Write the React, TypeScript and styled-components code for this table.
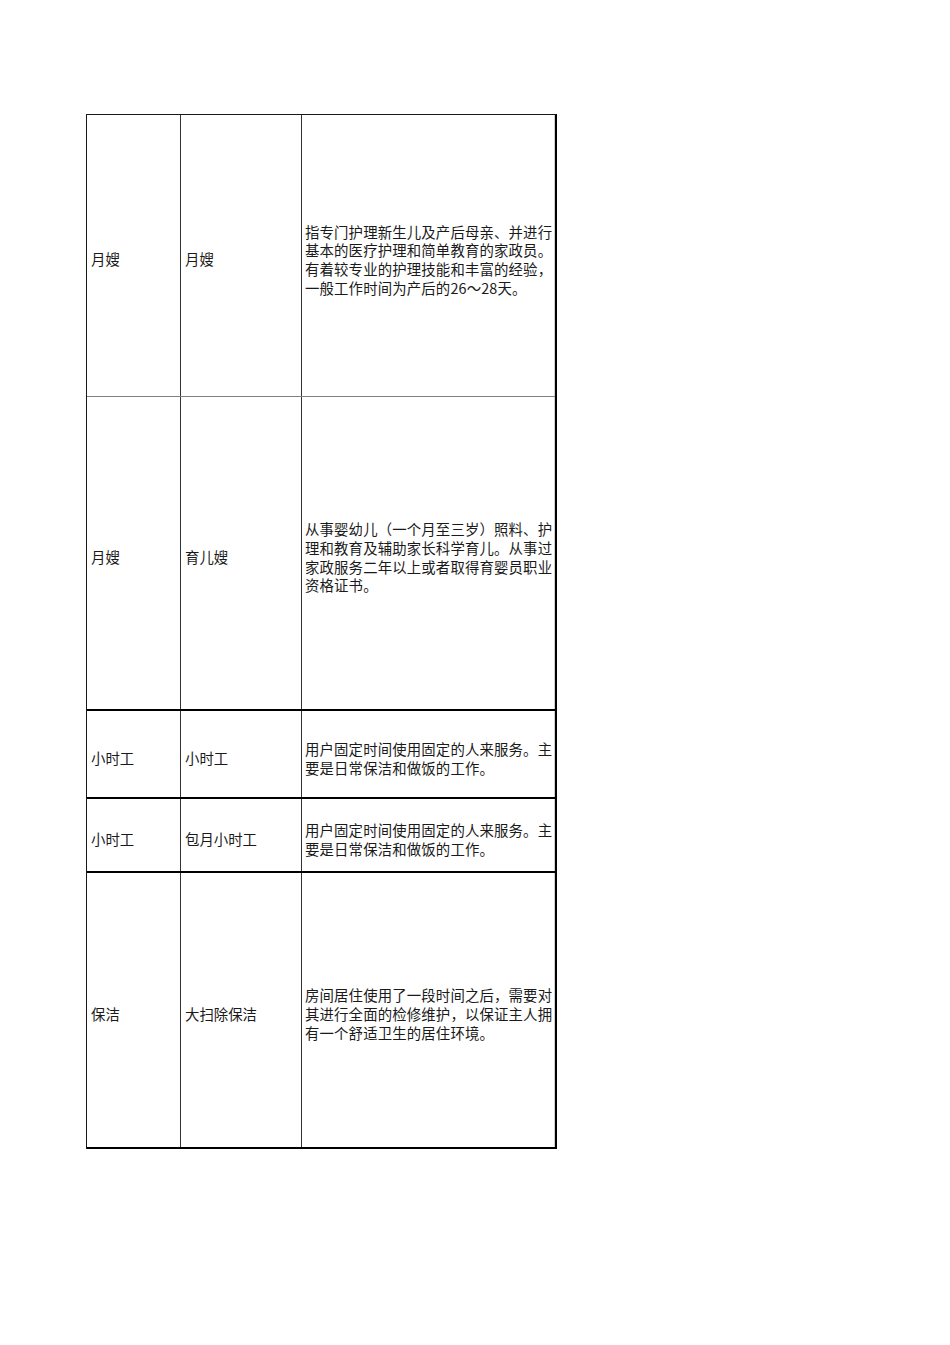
import React from 'react'
import styled, { createGlobalStyle } from 'styled-components'

type Entry = {
  category: string
  name: string
  lines: string[]
  height: number
  rule: 'thin' | 'thick'
}

const entries: Entry[] = [
  {
    category: '月嫂',
    name: '月嫂',
    lines: [
      '指专门护理新生儿及产后母亲、并进行',
      '基本的医疗护理和简单教育的家政员。',
      '有着较专业的护理技能和丰富的经验，',
      '一般工作时间为产后的26～28天。',
    ],
    height: 282,
    rule: 'thin',
  },
  {
    category: '月嫂',
    name: '育儿嫂',
    lines: [
      '从事婴幼儿（一个月至三岁）照料、护',
      '理和教育及辅助家长科学育儿。从事过',
      '家政服务二年以上或者取得育婴员职业',
      '资格证书。',
    ],
    height: 314,
    rule: 'thick',
  },
  {
    category: '小时工',
    name: '小时工',
    lines: ['用户固定时间使用固定的人来服务。主', '要是日常保洁和做饭的工作。'],
    height: 88,
    rule: 'thick',
  },
  {
    category: '小时工',
    name: '包月小时工',
    lines: ['用户固定时间使用固定的人来服务。主', '要是日常保洁和做饭的工作。'],
    height: 74,
    rule: 'thick',
  },
  {
    category: '保洁',
    name: '大扫除保洁',
    lines: [
      '房间居住使用了一段时间之后，需要对',
      '其进行全面的检修维护，以保证主人拥',
      '有一个舒适卫生的居住环境。',
    ],
    height: 276,
    rule: 'thick',
  },
]

export default function App() {
  return (
    <>
      <GlobalStyle />
      <Sheet>
        <Table>
          {entries.map((e, i) => (
            <Row key={i} $height={e.height} $rule={e.rule}>
              <Cell>{e.category}</Cell>
              <Cell>{e.name}</Cell>
              <DescCell>
                {e.lines.map((line, j) => (
                  <Line key={j}>{line}</Line>
                ))}
              </DescCell>
            </Row>
          ))}
        </Table>
      </Sheet>
    </>
  )
}

const GlobalStyle = createGlobalStyle`
  html, body {
    margin: 0;
    background: #fff;
  }
  body {
    font-family: "Noto Sans CJK SC", "Liberation Serif", serif;
    color: #1a1a1a;
  }
`

const Sheet = styled.div`
  width: 950px;
  height: 1345px;
  padding: 114px 0 0 86px;
  box-sizing: border-box;
`

const Table = styled.div`
  width: 471px;
  box-sizing: border-box;
  border-top: 1px solid #1a1a1a;
  border-left: 1px solid #1a1a1a;
  border-right: 2px solid #000;
  display: flex;
  flex-direction: column;
`

const Row = styled.div<{ $height: number; $rule: 'thin' | 'thick' }>`
  display: grid;
  grid-template-columns: 94px 121px 1fr;
  height: ${p => p.$height}px;
  box-sizing: border-box;
  border-bottom: ${p => (p.$rule === 'thick' ? '2px solid #000' : '1px solid #808080')};
`

const Cell = styled.div`
  display: flex;
  align-items: center;
  padding: 8px 0 0 4px;
  border-right: 1px solid #333;
  font-size: 14.4px;
  line-height: 18.7px;
  white-space: nowrap;
`

const DescCell = styled.div`
  display: flex;
  flex-direction: column;
  justify-content: center;
  padding: 9px 0 0 3px;
  box-shadow: inset -1px 0 0 #d0d0d0;
  font-size: 14.4px;
  line-height: 18.7px;
  letter-spacing: 0.15px;
  min-width: 0;
`

const Line = styled.div`
  white-space: nowrap;
`
